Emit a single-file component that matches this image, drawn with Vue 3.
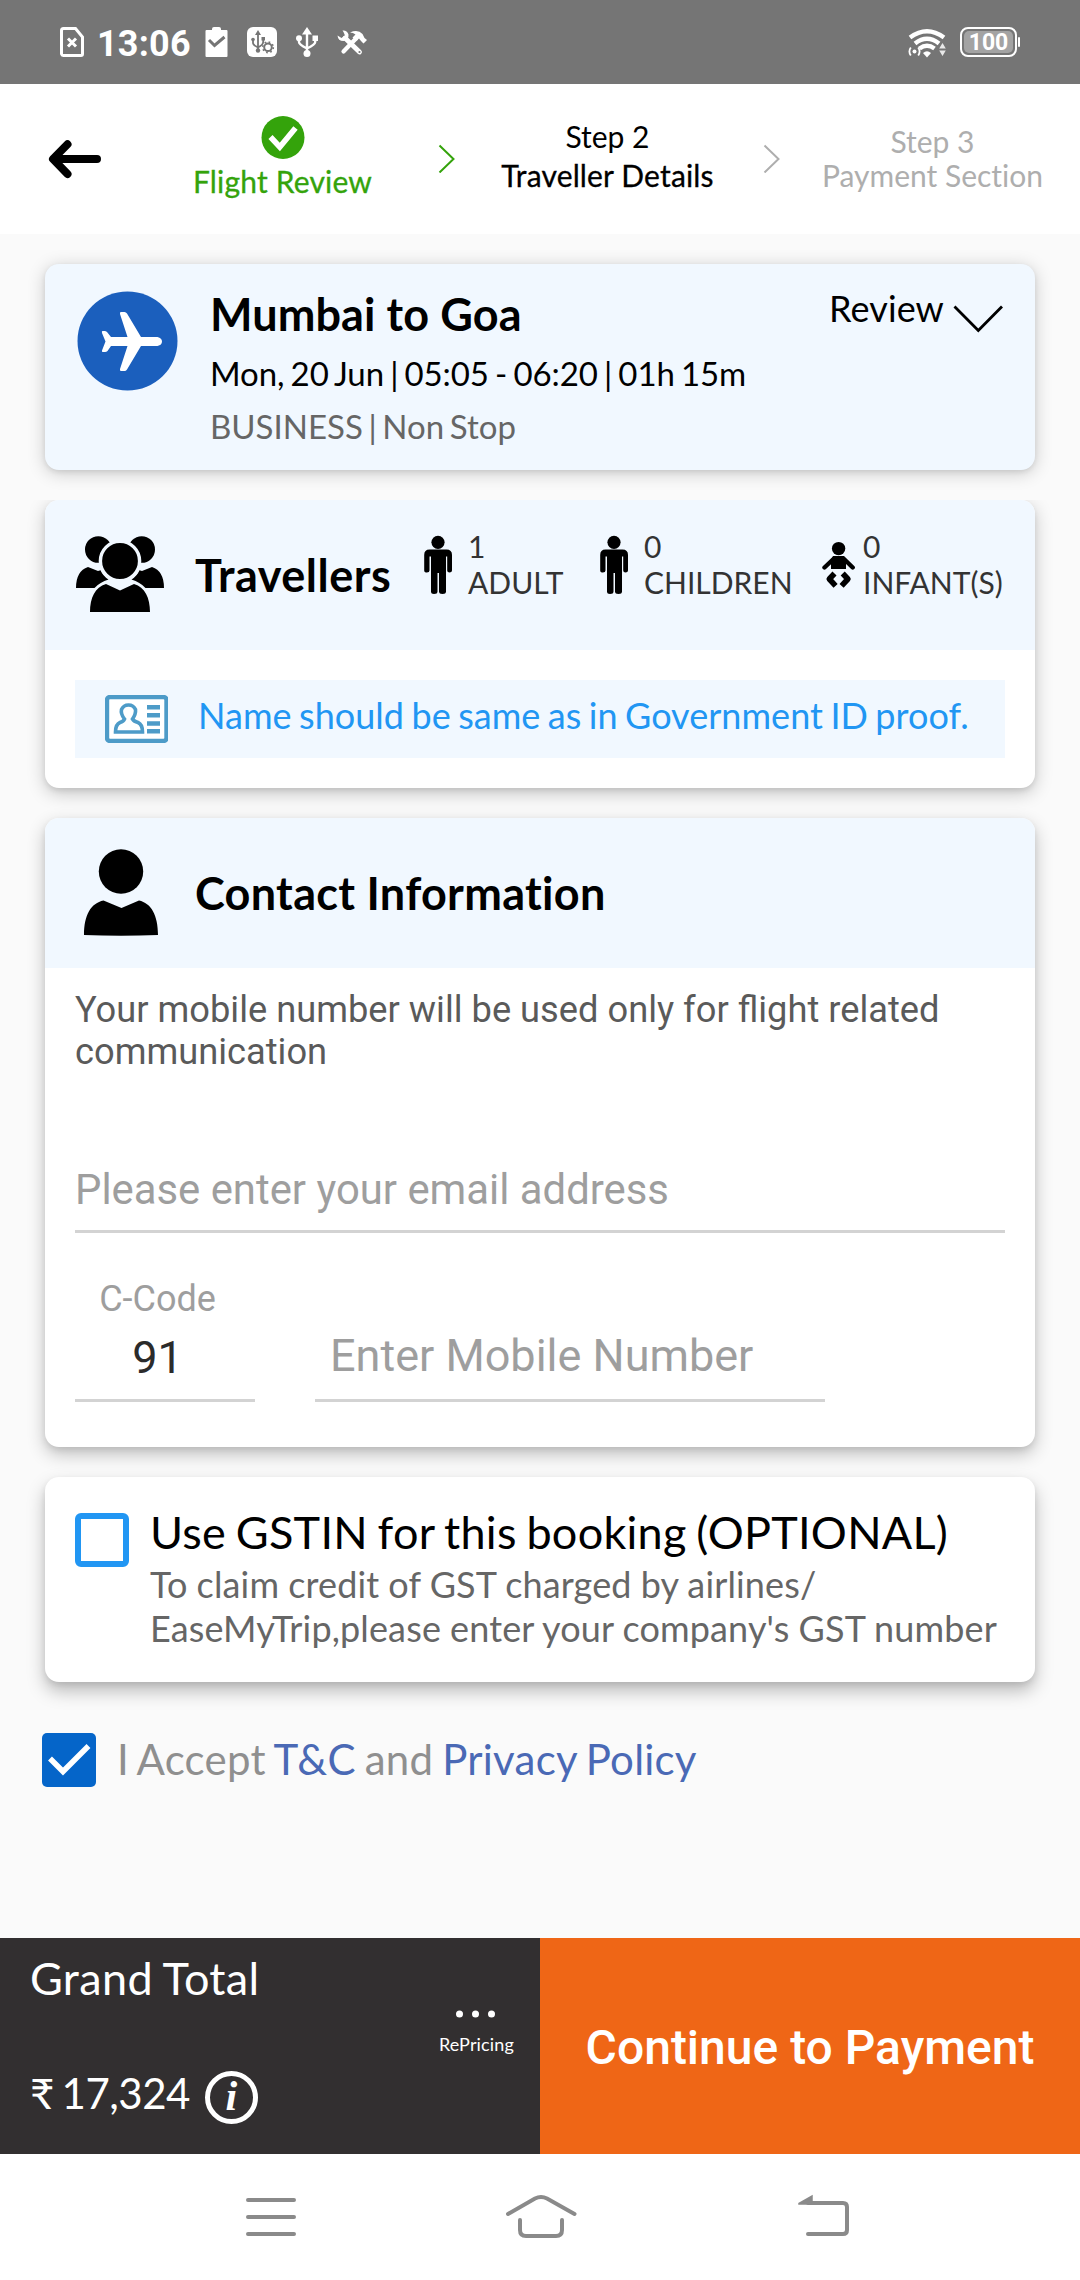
<script setup>
const pax = [
  { id: 'adult', count: '1', label: 'ADULT' },
  { id: 'child', count: '0', label: 'CHILDREN' },
  { id: 'infant', count: '0', label: 'INFANT(S)' },
]
</script>

<template>
  <div class="screen">
    <div class="status">
      <svg class="s-sim" viewBox="60 27 24 30"><path d="M63.5 28.5H75.5L82.5 37V54a1.5 1.5 0 0 1-1.5 1.5H63.5A2 2 0 0 1 61.5 54V30.5A2 2 0 0 1 63.5 28.5Z" fill="none" stroke="#fff" stroke-width="3"/><path d="M68 38.5L76 46.500M76 38.5L68 46.5" stroke="#fff" stroke-width="3"/></svg>
      <span class="clock">13:06</span>
      <svg class="s-clip" viewBox="205 27 23 30"><path d="M206.500 30H212V29Q212 27 214 27H219Q221 27 221 29V30H226.500Q227.500 30 227.500 31V56Q227.500 57 226.500 57H206.500Q205.500 57 205.500 56V31Q205.500 30 206.500 30Z" fill="#fff"/><path d="M209 40L214.500 45.500L224.500 37" fill="none" stroke="#757575" stroke-width="3"/></svg>
      <svg class="s-box" viewBox="247 27 30 30"><rect x="247" y="27" width="30" height="30" rx="6" fill="#fff"/><g fill="none" stroke="#757575" stroke-width="1.800"><path d="M258 33V51M253 40V43Q253 45 258 47.500M263.200 39V42Q263 45 258 47.500"/><circle cx="268" cy="47.300" r="3.800" stroke-width="2"/><circle cx="268" cy="47.300" r="5.300" stroke-width="1.600" stroke-dasharray="1.700 2.460"/></g><path d="M258 30L261 35H255Z" fill="#757575"/><circle cx="258" cy="50.500" r="2.200" fill="#757575"/><circle cx="253" cy="39.500" r="1.800" fill="#757575"/><rect x="261.500" y="37" width="3.500" height="3.500" fill="#757575"/></svg>
      <svg class="s-usb" viewBox="295 27 24 30"><g fill="none" stroke="#fff" stroke-width="2.400"><path d="M307 32V52M299 38.500V42Q299 44.500 307 48.500M315.200 38.500V42Q315.200 44.500 307 48.500"/></g><path d="M307 27L312 34.500H302Z" fill="#fff"/><circle cx="307" cy="53.500" r="3.500" fill="#fff"/><circle cx="299" cy="38.200" r="3" fill="#fff"/><rect x="312.500" y="35.500" width="5.500" height="5.500" fill="#fff"/></svg>
      <svg class="s-tool" viewBox="336 29 32 27"><path d="M345 38L359.500 52" stroke="#fff" stroke-width="4.800" stroke-linecap="round"/><path d="M342.500 30.500Q347 30 348.500 34.500Q349 40 343.500 41Q338 41 337.500 35.500L341.500 38L345 35.500L343.500 32Z" fill="#fff"/><circle cx="359.500" cy="52" r="1.100" fill="#757575"/><path d="M343.500 51.500L356 38.500" stroke="#fff" stroke-width="4.200" stroke-linecap="round"/><path d="M350 32.500Q358 29 362.500 34L364.500 38L367 40L363.500 43.500L361 41L359 38.500L356.500 41L352.500 37.500L355.500 34.500Q353 32.500 350 32.500Z" fill="#fff"/></svg>
      <svg class="s-wifi" viewBox="907 27 40 31"><g fill="none" stroke="#fff" stroke-width="4.400"><path d="M910 37.500Q927 25 944 37.500"/><path d="M915 43.500Q927 34 939 43.500"/><path d="M919.500 48.500Q927 43 934.500 48.500"/></g><path d="M923 53Q927 49.500 931 53L927 57.500Z" fill="#fff"/><circle cx="914.500" cy="51.500" r="2" fill="#fff"/><path d="M910.800 47.500Q908 51.500 910.800 55.500M918.200 47.500Q921 51.500 918.200 55.500" fill="none" stroke="#fff" stroke-width="1.800"/><path d="M942.500 43L945.800 48.500H939.200ZM942.500 56L945.800 50.500H939.200Z" fill="#e8e8e8"/></svg>
      <div class="battery"><span>100</span></div>
    </div>

    <header class="steps">
      <svg class="back" viewBox="45 134 60 50"><path d="M97 159H54M67.500 144.300L53 159L67.500 174" fill="none" stroke="#000" stroke-width="8" stroke-linecap="round" stroke-linejoin="round"/></svg>
      <div class="step done">
        <svg width="44" height="44" viewBox="260.500 116 44 44"><circle cx="282.500" cy="137.500" r="21.500" fill="#34a30b"/><path d="M270 137L279.300 147L295 128" fill="none" stroke="#fff" stroke-width="5.600"/></svg>
        <span>Flight Review</span>
      </div>
      <svg class="sep" viewBox="438 144 18 29"><path d="M439.500 145.500L453.500 159L439.500 172.500" fill="none" stroke="#34a30b" stroke-width="2"/></svg>
      <div class="step current"><span>Step 2</span><span class="name">Traveller Details</span></div>
      <svg class="sep" viewBox="438 144 18 29"><path d="M439.500 145.500L453.500 159L439.500 172.500" fill="none" stroke="#aeaeae" stroke-width="2"/></svg>
      <div class="step next"><span>Step 3</span><span>Payment Section</span></div>
    </header>

    <main>
      <section class="card trip">
        <svg class="plane" viewBox="77 291 101 100"><ellipse cx="127.500" cy="341" rx="50" ry="49.500" fill="#1b5fbd"/><path d="M157.500 337H141L127 313.500Q126 312 124.500 312H121Q119.500 312 120 314L127.500 337H111L107 332Q106 331 104.500 331H102.500Q101.500 331 102 333L105.500 341.500L102 350.500Q101.500 352 103 352H105Q106.500 352 107.500 351L111 346H127.500L120 369Q119.500 371 121 371H124.500Q126 371 127 369.500L141 346H157.500Q162 345 162 341.500Q162 338 157.500 337Z" fill="#fff"/></svg>
        <div class="trip-text">
          <h2 class="t-route">Mumbai to Goa</h2>
          <p class="t-date">Mon, 20 Jun | 05:05 - 06:20 | 01h 15m</p>
          <p class="t-class">BUSINESS | Non Stop</p>
        </div>
        <div class="review">
          <span>Review</span>
          <svg viewBox="953 303 51 31"><path d="M954.500 306.500L978.300 330.500L1002 306.500" fill="none" stroke="#000" stroke-width="2.800"/></svg>
        </div>
      </section>

      <section class="card travellers">
        <div class="head">
          <svg class="group" viewBox="75 535 91 79"><circle cx="98.300" cy="549.500" r="13.300"/><circle cx="141.700" cy="549.500" r="13.300"/><path d="M76 588Q76 571 88 567L98 571L100.500 570.200Q103 576 108.500 579.500Q100 582 94.500 588ZM164 588Q164 571 152 567L142 571L139.500 570.200Q137 576 131.500 579.500Q140 582 145.500 588Z"/><circle cx="120" cy="561" r="19.600" stroke="#f1f8ff" stroke-width="3.400"/><path d="M90 612C90 598 95 587 106 584L120 590.500L134 584C145 587 150 598 150 612Z"/></svg>
          <h2 class="t-trav">Travellers</h2>
          <div v-for="p in pax" :key="p.id" class="pax" :class="p.id">
            <svg v-if="p.id !== 'infant'" viewBox="424 535 28 60"><circle cx="438" cy="542.300" r="6.600"/><path d="M429.500 549.500H446.500Q452 549.500 452 555V570.500Q452 572.500 449.500 572.500Q447.200 572.500 447.200 570.500V556.500H446V591.500Q446 594 442.500 594Q439 594 439 591.500V573H437.500V591.500Q437.500 594 434 594Q431 594 431 591.500V556.500H429.500V570.500Q429.500 572.500 427 572.500Q424.200 572.500 424.200 570.500V555Q424.200 549.500 429.500 549.500Z"/></svg>
            <svg v-else viewBox="822 541 34 48"><circle cx="838.600" cy="548.600" r="6.700"/><path d="M833 556H844L846 560V569H831V560Z"/><path d="M834 558.500L824.500 567.500M843.500 558.500L852.700 567.500" stroke="#000" stroke-width="4.400" stroke-linecap="round"/><path d="M834.500 573.500L829.300 579L835.600 585.800M842.700 573.500L847.900 579L841.600 585.800" fill="none" stroke="#000" stroke-width="5.600" stroke-linejoin="round"/></svg>
            <div><span>{{ p.count }}</span><span class="lbl">{{ p.label }}</span></div>
          </div>
        </div>
        <div class="notice">
          <svg viewBox="105 695 63 48"><rect x="107" y="697" width="59.500" height="44" rx="3" fill="#fff" stroke="#4d9bc8" stroke-width="4.400"/><path d="M124.500 719Q120.500 714 121.500 709.500Q123.500 705 128.500 705Q133.500 705 135.500 709.500Q136 714 132.500 719Q134 721.500 138 722.500Q142.500 724.500 142.500 732H115.500Q115.500 724.500 120 722.500Q123.500 721.500 124.500 719Z" fill="#fff" stroke="#4d9bc8" stroke-width="3.600"/><path d="M147 707.300H160M147 715.200H160M147 723.500H160M147 731.300H160" stroke="#4d9bc8" stroke-width="4.400"/></svg>
          <span>Name should be same as in Government ID proof.</span>
        </div>
      </section>

      <section class="card contact">
        <div class="head">
          <svg class="person" viewBox="83 848 76 89"><circle cx="121" cy="871.500" r="22.200"/><path d="M84 935C84 915 91 903 103.500 900.500L121.500 908L139 900.500C151 903 158 915 158 935Q121 936.500 84 935Z"/></svg>
          <h2 class="t-contact">Contact Information</h2>
        </div>
        <p class="hint">Your mobile number will be used only for flight related<br>communication</p>
        <div class="field email">Please enter your email address</div>
        <div class="phone">
          <div class="code"><label>C-Code</label><div class="field">91</div></div>
          <div class="field mobile">Enter Mobile Number</div>
        </div>
      </section>

      <section class="card gst">
        <i class="box"></i>
        <div>
          <p class="t-gst">Use GSTIN for this booking (OPTIONAL)</p>
          <p class="t-sub">To claim credit of GST charged by airlines/<br>EaseMyTrip,please enter your company's GST number</p>
        </div>
      </section>

      <div class="accept">
        <svg viewBox="42 1733 54 54"><rect x="42" y="1733" width="54" height="54" rx="5" fill="#0565c9"/><path d="M50 1758.500L63 1771.500L88.500 1746" fill="none" stroke="#fff" stroke-width="5.500"/></svg>
        <span>I Accept <a>T&amp;C</a> and <a>Privacy Policy</a></span>
      </div>
    </main>

    <footer class="pay">
      <div class="total">
        <div>
          <p class="t-grand">Grand Total</p>
          <p class="price"><span>₹ 17,324</span><i class="info">i</i></p>
        </div>
        <div class="reprice">
          <svg viewBox="455 2009 41 10"><circle cx="459.500" cy="2014" r="3.500"/><circle cx="475.500" cy="2014" r="3.500"/><circle cx="491.500" cy="2014" r="3.500"/></svg>
          <span>RePricing</span>
        </div>
      </div>
      <div class="cta"><span>Continue to Payment</span></div>
    </footer>

    <nav>
      <svg viewBox="230 2190 80 52"><path d="M248 2200H294M248 2217H294M248 2234H294"/></svg>
      <svg viewBox="501 2190 80 52"><path d="M508 2214L535 2198.500Q541 2195.500 547 2198.500L574.500 2214M520 2220V2230Q520 2236 526 2236H556Q562 2236 562 2230V2220"/></svg>
      <svg viewBox="784 2190 80 52"><path d="M808 2203H843Q847 2203 847 2207V2230Q847 2234 843 2234H808"/><path d="M799 2203.500L812 2196V2204H799Z" stroke-width="1.500" fill="#8a8a8a"/></svg>
    </nav>
  </div>
</template>

<style>
body { margin: 0; }
</style>

<style scoped>
.screen { width: 1080px; height: 2280px; overflow: hidden; background: #fafafa; display: flex; flex-direction: column; font-family: Lato, sans-serif; font-variant-ligatures: none; color: #000; }
h2, p { margin: 0; font-weight: 400; }
svg { display: block; flex: none; }
span { white-space: nowrap; }
.status { height: 84px; flex: none; background: #757575; display: flex; align-items: center; color: #fff; font-family: Roboto, sans-serif; }
.s-sim { width: 24px; height: 30px; margin-left: 60px; }
.clock { font-size: 36px; font-weight: 700; line-height: 42px; width: 92px; margin-left: 13px; margin-top: 3px; letter-spacing: .2px; }
.s-clip { width: 23px; height: 30px; margin-left: 16px; }
.s-box { width: 30px; height: 30px; margin-left: 19px; }
.s-usb { width: 24px; height: 30px; margin-left: 18px; }
.s-tool { width: 32px; height: 27px; margin-left: 17px; }
.s-wifi { width: 40px; height: 31px; margin-left: auto; }
.battery { position: relative; box-sizing: border-box; width: 57px; height: 30px; margin: 0 63px 0 13px; border: 2px solid #fff; border-radius: 8px; padding: 2px; }
.battery::after { content: ''; position: absolute; right: -5px; top: 8px; width: 2px; height: 10px; background: #fff; border-radius: 1px; }
.battery span { display: block; height: 22px; border-radius: 5px; background: #a3a3a3; font-size: 23px; font-weight: 700; line-height: 23px; text-align: center; }

.steps { height: 150px; flex: none; background: #fff; display: grid; grid-template-columns: 150px 265px 63px 259px 69px 253px; font-size: 30px; }
.back { width: 60px; height: 50px; margin: 50px 0 0 45px; }
.step { display: flex; flex-direction: column; align-items: center; line-height: 36px; }
.done { color: #34a30b; padding-top: 32px; }
.done span { margin-top: 3px; -webkit-text-stroke: .3px; letter-spacing: .18px; }
.current { padding-top: 33px; line-height: 39px; }
.current .name { -webkit-text-stroke: .3px; letter-spacing: .15px; }
.next { padding-top: 40px; line-height: 34px; color: #aeaeae; }
.sep { width: 18px; height: 29px; margin: 60px auto 0; }

main { padding: 30px 45px 0; flex: 1; }
.card { border-radius: 14px; background: #fff; margin-bottom: 30px; box-shadow: 0 3px 18px rgba(0,0,0,.2), 0 2px 5px rgba(0,0,0,.08); }
.trip { height: 206px; background: #f1f8ff; display: flex; }
.plane { width: 101px; height: 100px; margin: 27px 0 0 32px; }
.trip-text { margin: 23px 0 0 32px; flex: 1; white-space: nowrap; }
.t-route, .t-trav, .t-contact { font-size: 45px; line-height: 54px; font-weight: 700; white-space: nowrap; }
.t-route { letter-spacing: .1px; }
.t-date { font-size: 33px; line-height: 40px; margin-top: 12px; word-spacing: -2.2px; letter-spacing: -.08px; }
.t-class { font-size: 33px; line-height: 40px; margin-top: 13px; color: #666; word-spacing: -2.8px; }
.review { display: flex; font-size: 36px; line-height: 43px; margin: 23px 31px 0 0; letter-spacing: .1px; }
.review svg { width: 51px; height: 31px; margin: 16px 0 0 9px; }

.travellers { height: 288px; clip-path: inset(0 -45px -45px -45px); box-shadow: 0 5px 18px rgba(0,0,0,.22), 0 3px 5px rgba(0,0,0,.08); }
.head { height: 150px; background: #f1f8ff; border-radius: 14px 14px 0 0; display: flex; }
.group { width: 91px; height: 79px; margin: 35px 0 0 30px; }
.t-trav { margin: 48px 0 0 29px; width: 195px; letter-spacing: .5px; }
.pax { display: flex; color: #333; font-size: 30px; line-height: 36px; }
.pax > div { display: flex; flex-direction: column; margin-top: 28px; }
.pax svg { width: 28px; height: 60px; margin-top: 35px; }
.adult { margin-left: 34px; width: 176px; }
.adult div { margin-left: 16px; }
.child div { margin-left: 16px; }
.child { width: 222px; }
.pax.infant svg { width: 34px; height: 48px; margin-top: 41px; }
.infant div { margin-left: 7px; }
.notice { margin: 30px 30px 0; height: 78px; background: #f1f8ff; display: flex; color: #2196f3; font-size: 36px; line-height: 43px; }
.notice svg { width: 63px; height: 48px; margin: 15px 0 0 30px; }
.notice span { margin: 14px 0 0 30px; word-spacing: -1.8px; letter-spacing: .03px; }

.contact { height: 629px; box-shadow: 0 7px 18px rgba(0,0,0,.24), 0 3px 6px rgba(0,0,0,.08); font-family: Roboto, sans-serif; }
.person { width: 76px; height: 89px; margin: 30px 0 0 38px; }
.t-contact { margin: 48px 0 0 36px; font-family: Lato, sans-serif; letter-spacing: .3px; }
.hint { margin: 21px 30px 0; font-size: 36.25px; line-height: 42px; color: #5a5a5a; white-space: nowrap; font-variant-ligatures: normal; }
.field { box-sizing: border-box; border-bottom: 3px solid #d3d3d3; color: #9e9e9e; white-space: nowrap; }
.email { margin: 92px 30px 0; height: 68px; font-size: 41.85px; line-height: 50px; }
.phone { display: flex; margin: 45px 30px 0; }
.code { width: 180px; text-align: center; }
.code label { display: block; margin-right: 15px; font-size: 36px; line-height: 42px; color: #9e9e9e; }
.code .field { margin-top: 11px; height: 71px; font-size: 45px; line-height: 53px; color: #2b2b2b; padding-right: 15px; }
.mobile { width: 510px; margin: 51px 0 0 60px; height: 73px; padding-left: 15px; font-size: 45px; line-height: 53px; }

.gst { height: 205px; display: flex; box-shadow: 0 9px 18px rgba(0,0,0,.26), 0 3px 6px rgba(0,0,0,.08); }
.box { box-sizing: border-box; width: 54px; height: 54px; border: 6px solid #2196f3; border-radius: 6px; margin: 36px 21px 0 30px; flex: none; }
.t-gst { font-size: 45px; line-height: 54px; margin-top: 28px; white-space: nowrap; word-spacing: -2px; letter-spacing: .25px; }
.t-sub { font-size: 36px; line-height: 44px; color: #666; margin-top: 3px; white-space: nowrap; word-spacing: -.3px; letter-spacing: .14px; }
.accept { display: flex; margin: 51px 0 0 -3px; color: #8f8f8f; font-size: 42px; line-height: 50px; }
.accept svg { width: 54px; height: 54px; }
.accept span { margin: 1px 0 0 21px; word-spacing: -2px; letter-spacing: .23px; }
.accept a { color: #4a69b5; }

.pay { height: 216px; flex: none; display: flex; color: #fff; }
.total { width: 540px; box-sizing: border-box; background: #322f30; padding: 0 26px 0 30px; display: flex; justify-content: space-between; }
.t-grand { font-size: 45px; line-height: 54px; margin-top: 13px; word-spacing: -1px; letter-spacing: .35px; }
.price { display: flex; font-size: 42px; line-height: 50px; margin-top: 62px; }
.price span { margin-top: 1px; word-spacing: -2.5px; letter-spacing: -.5px; }
.info { box-sizing: border-box; width: 53px; height: 53px; border: 5px solid #fff; border-radius: 50%; margin: 4px 0 0 15px; font: italic 700 42px/40px "Liberation Serif", serif; text-align: center; }
.reprice { display: flex; flex-direction: column; align-items: center; font-size: 18px; line-height: 22px; margin-top: 71px; }
.reprice svg { width: 41px; height: 10px; fill: #fff; margin-right: 2px; }
.reprice span { margin-top: 14px; letter-spacing: .15px; }
.cta { width: 540px; background: #ef6616; display: flex; justify-content: center; font: 500 48px/56px Roboto, sans-serif; }
.cta span { margin-top: 82px; }
nav { height: 126px; flex: none; background: #fff; display: flex; gap: 194px; padding-left: 230px; }
nav svg { width: 80px; height: 52px; margin-top: 36px; fill: none; stroke: #8a8a8a; stroke-width: 4; stroke-linecap: round; }
nav svg + svg { margin-left: -3px; }
nav svg + svg + svg { margin-left: 9px; }
</style>
